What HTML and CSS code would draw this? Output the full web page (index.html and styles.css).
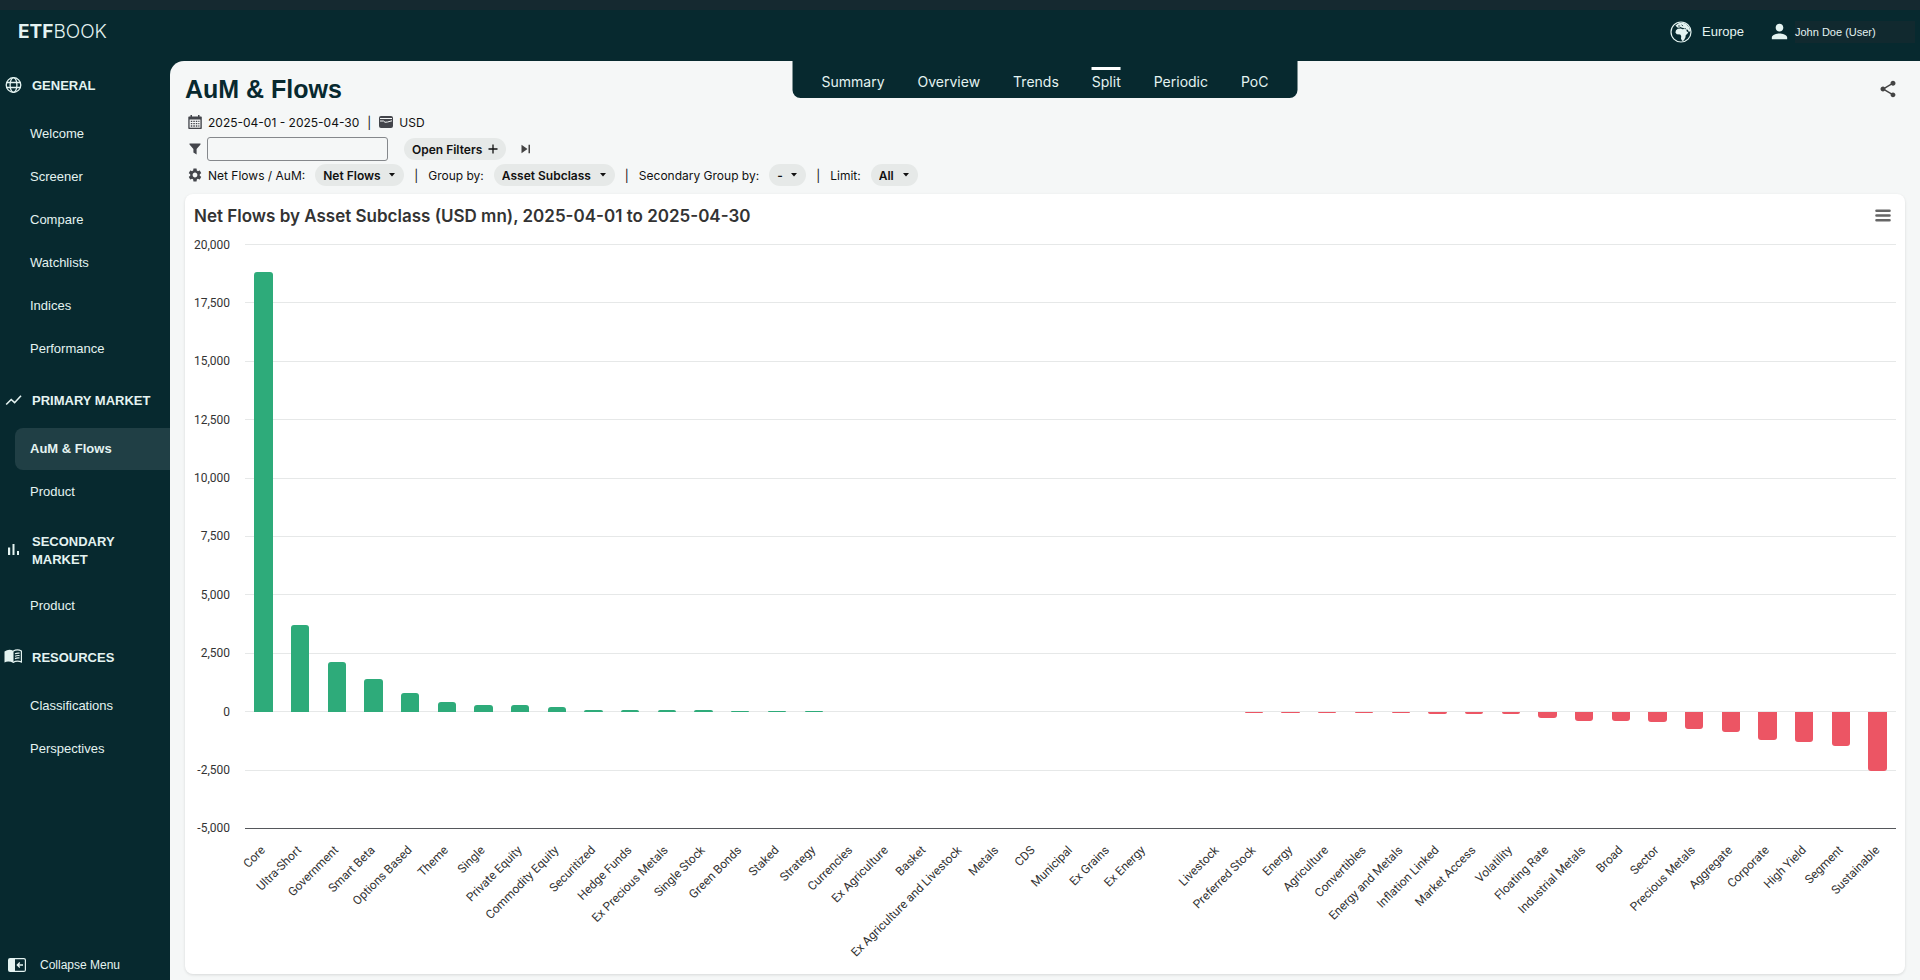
FILE: index.html
```html
<!DOCTYPE html>
<html lang="en">
<head>
  <meta charset="UTF-8">
  <meta name="viewport" content="width=device-width, initial-scale=1.0">
  <title>ETFBOOK - AuM &amp; Flows</title>
  <link rel="stylesheet" href="styles.css">
</head>
<body>
  <header class="topbar">
    <a class="logo" href="#"><b>ETF</b>BOOK</a>
    <div class="account">
      <button class="region" type="button">
        <svg width="22" height="22" viewBox="0 0 22 22">
          <circle cx="11" cy="11" r="10" fill="none" stroke="currentColor" stroke-width="1.2"/>
          <path fill="currentColor" d="M5.500 4.500 8.500 2.200 12 1.600l3.800 1.200 3.400 3.400 1 3.600-1.200 1.400-1.200-2.400-1.600-.4.600 2 1.400.8-1 1.800-1.400 1-.4 2.600-1.600 2.800-1.600.6-1.200-2.200.2-2.800-1-1.600-3.400-.2-1.400-1.800.6-2.200 1.800-1.400 3-.4 1.600.8 2-.2-.8-1-1.600-.2-1.400-.8-1.600.8-1.600-.2z"/>
          <path d="M8 5h2.200M11.500 3.800l1.600 1.200M14.400 7.600l1.600.2" stroke="#07292f" stroke-width=".8"/>
        </svg>
        Europe
      </button>
      <button class="user" type="button">
        <svg width="23" height="23" viewBox="0 0 24 24" fill="currentColor"><path d="M12 12c2.21 0 4-1.79 4-4s-1.79-4-4-4-4 1.79-4 4 1.79 4 4 4zm0 2c-2.67 0-8 1.34-8 4v2h16v-2c0-2.66-5.33-4-8-4z"/></svg>
        <span>John Doe (User)</span>
      </button>
    </div>
  </header>

  <div class="layout">
    <aside class="sidebar">
      <nav>
        <h2>
          <svg width="18" height="18" viewBox="0 0 18 18" fill="none" stroke="currentColor" stroke-width="1.3"><circle cx="9.500" cy="8" r="7.3"/><ellipse cx="9.500" cy="8" rx="3.4" ry="7.3"/><path d="M2.7 5.5h13.6M2.7 10.5h13.6"/></svg>
          GENERAL
        </h2>
        <ul>
          <li><a href="#">Welcome</a></li>
          <li><a href="#">Screener</a></li>
          <li><a href="#">Compare</a></li>
          <li><a href="#">Watchlists</a></li>
          <li><a href="#">Indices</a></li>
          <li><a href="#">Performance</a></li>
        </ul>
        <h2>
          <svg width="18" height="18" viewBox="0 0 18 18" fill="none" stroke="currentColor" stroke-width="1.6"><path d="M2.200 12.500l5-5 3.400 3.200L17 3.800"/></svg>
          PRIMARY MARKET
        </h2>
        <ul>
          <li><a class="active" href="#">AuM &amp; Flows</a></li>
          <li><a href="#">Product</a></li>
        </ul>
        <h2>
          <svg width="18" height="18" viewBox="0 0 18 18" fill="currentColor"><path d="M4 5.5h2.200V13H4zM8.500 2h2v11h-2zM13 9h2v4h-2z"/></svg>
          SECONDARY MARKET
        </h2>
        <ul>
          <li><a href="#">Product</a></li>
        </ul>
        <h2>
          <svg width="18" height="18" viewBox="0 0 18 18"><path fill="currentColor" d="M0.500 2.500Q5-.5 9.500 2v12Q4.500 11.500 0.500 13.500z"/><path fill="none" stroke="currentColor" stroke-width="1.2" d="M9 2.200q4.500-2.600 8.400-.2v11Q13 11 9 13.500M11 4.800q2.200-1 4.600-.6M11 7.200q2.200-1 4.600-.6M11 9.600q2.200-1 4.600-.6"/></svg>
          RESOURCES
        </h2>
        <ul>
          <li><a href="#">Classifications</a></li>
          <li><a href="#">Perspectives</a></li>
        </ul>
      </nav>
      <button class="collapse" type="button">
        <svg width="18" height="14" viewBox="0 0 18 14"><rect x=".6" y=".6" width="16.800" height="12.800" rx="1.500" fill="none" stroke="currentColor" stroke-width="1.200"/><path fill="currentColor" d="M1 1h6v12H1z"/><path d="M15 7H9.500M11.800 4.500 9.300 7l2.500 2.500" fill="none" stroke="currentColor" stroke-width="1.300"/></svg>
        Collapse Menu
      </button>
    </aside>

    <main class="content">
      <nav class="tabs">
        <a href="#">Summary</a>
        <a href="#">Overview</a>
        <a href="#">Trends</a>
        <a class="active" href="#">Split</a>
        <a href="#">Periodic</a>
        <a href="#">PoC</a>
      </nav>

      <div class="title-row">
        <h1>AuM &amp; Flows</h1>
        <button class="icon-btn" type="button" aria-label="Share">
          <svg width="20" height="20" viewBox="0 0 24 24" fill="currentColor"><path d="M18 16.080c-.76 0-1.440.3-1.960.77L8.910 12.700c.05-.23.09-.46.09-.7s-.04-.47-.09-.7l7.050-4.110c.54.5 1.250.81 2.040.81 1.660 0 3-1.340 3-3s-1.340-3-3-3-3 1.340-3 3c0 .24.04.47.09.7L8.040 9.810C7.500 9.310 6.790 9 6 9c-1.660 0-3 1.340-3 3s1.340 3 3 3c.79 0 1.500-.31 2.040-.81l7.120 4.160c-.05.21-.08.43-.08.65 0 1.610 1.310 2.920 2.920 2.920s2.920-1.310 2.920-2.920-1.310-2.920-2.920-2.920z"/></svg>
        </button>
      </div>

      <div class="meta">
        <svg width="14" height="14" viewBox="0 0 14 14"><path fill="currentColor" d="M2.500 0H4v1.500h6V0h1.500v1.500H13a.8.8 0 0 1 .8.800v11a.7.7 0 0 1-.7.700H1a.7.7 0 0 1-.7-.700v-11a.8.8 0 0 1 .7-.800h1.500z"/><path fill="#f5f7f7" d="M1.600 4.500h10.800v8.200H1.600z"/><path fill="none" stroke="currentColor" stroke-width="1.300" stroke-dasharray="1.500 1" d="M2.800 6.400h8.600M2.800 8.700h8.600M2.800 11h8.600"/></svg>
        <span>2025-04-01 - 2025-04-30</span>
        <span class="sep">|</span>
        <svg width="14" height="12" viewBox="0 0 14 12"><rect width="14" height="12" rx="2" fill="currentColor"/><path fill="none" stroke="#f5f7f7" d="M1 2.500h12M1 5h3.500q1 2 4 1L13 4.800"/></svg>
        <span>USD</span>
      </div>

      <div class="filters">
        <svg width="14" height="14" viewBox="0 0 14 14" fill="currentColor"><path d="M1.500 1.500h11v1L8.600 7v5.500L5.400 10.500V7L1.500 2.500z"/></svg>
        <input type="text" aria-label="Filter">
        <button class="pill" type="button">Open Filters
          <svg width="10" height="10" viewBox="0 0 10 10" stroke="currentColor" stroke-width="1.300"><path d="M5 .5v9M.5 5h9"/></svg>
        </button>
        <button class="icon-btn" type="button" aria-label="Next">
          <svg width="10" height="10" viewBox="0 0 10 10" fill="currentColor"><path d="M.5.800v8.400L6.500 5zM7.500.8H9v8.400H7.500z"/></svg>
        </button>
      </div>

      <div class="settings">
        <svg width="16" height="16" viewBox="0 0 24 24" fill="currentColor"><path d="M19.140 12.940c.04-.3.060-.61.060-.94 0-.32-.02-.64-.07-.94l2.030-1.580c.18-.14.230-.41.120-.61l-1.920-3.320c-.12-.22-.37-.29-.59-.22l-2.390.96c-.5-.38-1.030-.7-1.620-.94l-.36-2.540c-.04-.24-.24-.41-.48-.41h-3.840c-.24 0-.43.17-.47.41l-.36 2.540c-.59.24-1.130.57-1.620.94l-2.390-.96c-.22-.08-.47 0-.59.22L2.740 8.870c-.12.21-.08.47.12.61l2.030 1.580c-.05.3-.09.63-.09.94s.02.64.07.94l-2.030 1.580c-.18.14-.23.41-.12.61l1.920 3.320c.12.22.37.29.59.22l2.390-.96c.5.38 1.030.7 1.620.94l.36 2.540c.05.24.24.41.48.41h3.840c.24 0 .44-.17.47-.41l.36-2.540c.59-.24 1.130-.56 1.620-.94l2.390.96c.22.08.47 0 .59-.22l1.920-3.320c.12-.22.07-.47-.12-.61l-2.010-1.580zM12 15.600c-1.980 0-3.600-1.620-3.600-3.600s1.620-3.600 3.600-3.600 3.600 1.620 3.600 3.600-1.620 3.600-3.600 3.600z"/></svg>
        <label for="metric">Net Flows / AuM:</label>
        <div class="pill">
          <select id="metric"><option>Net Flows</option></select>
          <svg width="6" height="4" viewBox="0 0 6 4" fill="currentColor"><path d="M0 0h6L3 3.500z"/></svg>
        </div>
        <span class="sep">|</span>
        <label for="group">Group by:</label>
        <div class="pill">
          <select id="group"><option>Asset Subclass</option></select>
          <svg width="6" height="4" viewBox="0 0 6 4" fill="currentColor"><path d="M0 0h6L3 3.500z"/></svg>
        </div>
        <span class="sep">|</span>
        <label for="group2">Secondary Group by:</label>
        <div class="pill">
          <select id="group2"><option>-</option></select>
          <svg width="6" height="4" viewBox="0 0 6 4" fill="currentColor"><path d="M0 0h6L3 3.500z"/></svg>
        </div>
        <span class="sep">|</span>
        <label for="limit">Limit:</label>
        <div class="pill">
          <select id="limit"><option>All</option></select>
          <svg width="6" height="4" viewBox="0 0 6 4" fill="currentColor"><path d="M0 0h6L3 3.500z"/></svg>
        </div>
      </div>

      <section class="card">
        <div class="card-head">
          <h3>Net Flows by Asset Subclass (USD mn), 2025-04-01 to 2025-04-30</h3>
          <button class="icon-btn" type="button" aria-label="Chart menu">
            <svg width="16" height="13" viewBox="0 0 16 13" stroke="currentColor" stroke-width="2.600" stroke-linecap="round"><path d="M1.500 1.800h13M1.500 6.500h13M1.500 11.200h13"/></svg>
          </button>
        </div>
        <div class="chart">
          <div class="ticks" id="ticks"></div>
          <div class="bars" id="bars"></div>
        </div>
        <div class="labels" id="labels"></div>
      </section>
    </main>
  </div>

  <script>
    const max = 20000;
    const min = -5000;
    const step = 2500;

    const data = [
      ["Core", 18820], ["Ultra-Short", 3730], ["Government", 2150], ["Smart Beta", 1390],
      ["Options Based", 810], ["Theme", 410], ["Single", 290], ["Private Equity", 290],
      ["Commodity Equity", 210], ["Securitized", 90], ["Hedge Funds", 90],
      ["Ex Precious Metals", 90], ["Single Stock", 85], ["Green Bonds", 45], ["Staked", 45],
      ["Strategy", 45], ["Currencies", 0], ["Ex Agriculture", 0], ["Basket", 0],
      ["Ex Agriculture and Livestock", 0], ["Metals", 0], ["CDS", 0], ["Municipal", 0],
      ["Ex Grains", 0], ["Ex Energy", 0], ["", 0], ["Livestock", 0],
      ["Preferred Stock", -40], ["Energy", -40], ["Agriculture", -40], ["Convertibles", -40],
      ["Energy and Metals", -45], ["Inflation Linked", -65], ["Market Access", -105],
      ["Volatility", -105], ["Floating Rate", -270], ["Industrial Metals", -400],
      ["Broad", -400], ["Sector", -430], ["Precious Metals", -710], ["Aggregate", -840],
      ["Corporate", -1200], ["High Yield", -1280], ["Segment", -1440], ["Sustainable", -2530]
    ];

    let ticks = "";
    for (let v = max; v >= min; v -= step) {
      ticks += `<div class="tick"><span>${v.toLocaleString("en-US")}</span><i></i></div>`;
    }
    document.getElementById("ticks").innerHTML = ticks;

    let bars = "";
    let labels = "";
    data.forEach(([name, value]) => {
      const range = value < 0 ? -min : max;
      const height = Math.abs(value) / range * 100;
      bars += `<div class="slot"><div class="${value < 0 ? "neg" : "pos"}" style="height: ${height}%"></div></div>`;
      labels += `<div class="label"><span>${name}</span></div>`;
    });
    document.getElementById("bars").innerHTML = bars;
    document.getElementById("labels").innerHTML = labels;
  </script>
</body>
</html>
```

FILE: styles.css
```css
* {
  box-sizing: border-box;
}

body {
  margin: 0;
  min-height: 100vh;
  display: flex;
  flex-direction: column;
  background: #07292f;
  color: #111;
  font-family: "Liberation Sans", Arial, sans-serif;
  font-size: 13px;
}

h1, h2, h3, ul {
  margin: 0;
  padding: 0;
}

a {
  color: inherit;
  text-decoration: none;
}

button, select {
  border: none;
  padding: 0;
  background: none;
  color: inherit;
  font: inherit;
  cursor: pointer;
}

svg {
  flex: none;
}

/* top bar */
.topbar {
  height: 61px;
  padding: 0 5px 0 18px;
  border-top: 10px solid #152930;
  display: flex;
  justify-content: space-between;
  align-items: center;
  color: #e4f3f1;
}

.logo {
  font-family: Inter, sans-serif;
  font-size: 19px;
  font-weight: 300;
  margin-bottom: 8px;
}

.logo b {
  font-weight: 700;
}

.account {
  display: flex;
  gap: 24px;
  margin-bottom: 8px;
}

.region, .user {
  display: flex;
  align-items: center;
}

.region {
  gap: 10px;
}

.user {
  gap: 4px;
  font-size: 11px;
}

.user span {
  width: 120px;
  line-height: 22px;
  text-align: left;
  background: #11292f;
}

.layout {
  flex: 1;
  display: flex;
}

/* sidebar */
.sidebar {
  width: 170px;
  padding-top: 14px;
  display: flex;
  flex-direction: column;
  justify-content: space-between;
  color: #e4f3f1;
}

.sidebar h2 {
  display: flex;
  align-items: center;
  gap: 10px;
  min-height: 22px;
  margin: 20px 0 16px;
  padding-left: 4px;
  font-size: 13px;
  line-height: 18px;
}

.sidebar h2:first-child {
  margin-top: 0;
}

.sidebar ul {
  list-style: none;
  display: flex;
  flex-direction: column;
  gap: 1px;
}

.sidebar li a {
  display: block;
  margin-left: 15px;
  padding-left: 15px;
  line-height: 42px;
  border-radius: 8px 0 0 8px;
}

.sidebar li a.active {
  background: #203f45;
  font-weight: bold;
}

.collapse {
  display: flex;
  align-items: center;
  gap: 14px;
  padding: 0 8px 8px;
  font-size: 12px;
}

/* main */
.content {
  flex: 1;
  min-width: 0;
  position: relative;
  display: flex;
  flex-direction: column;
  padding: 12px 15px 6px;
  background: #f5f7f7;
  border-top-left-radius: 14px;
}

.tabs {
  position: absolute;
  top: 0;
  left: 50%;
  transform: translateX(-50%);
  display: flex;
  gap: 33px;
  height: 37px;
  padding: 6px 29px 0;
  background: #07292f;
  border-radius: 0 0 8px 8px;
  color: #e4f3f1;
  font-family: Inter, sans-serif;
  font-size: 14px;
  line-height: 24px;
}

.tabs a {
  height: 27px;
  border-top: 3px solid transparent;
}

.tabs a.active {
  border-top-color: #fff;
}

.title-row {
  display: flex;
  justify-content: space-between;
  align-items: center;
  height: 32px;
  padding-right: 7px;
}

h1 {
  font-size: 25px;
  color: #07292f;
}

.icon-btn {
  display: flex;
  color: #444;
}

.meta, .filters, .settings {
  display: flex;
  align-items: center;
  height: 26px;
  font-family: Inter, sans-serif;
  font-size: 12px;
}

.meta svg, .filters > svg, .settings > svg {
  color: #43454b;
}

.meta {
  gap: 6px;
  height: 31px;
  padding: 3px 0 0 3px;
}

.meta .sep {
  margin: 0 2px;
}

.filters {
  padding-left: 3px;
}

.filters input {
  width: 181px;
  height: 24px;
  margin: 0 16px 0 5px;
  border: 1px solid #85888c;
  border-radius: 3px;
  background: transparent;
  font: inherit;
}

.filters .pill {
  gap: 6px;
}

.filters .icon-btn {
  margin-left: 15px;
}

.settings {
  gap: 10px;
  padding-left: 2px;
}

.settings > svg {
  margin-right: -5px;
}

.pill {
  display: flex;
  align-items: center;
  gap: 8px;
  height: 22px;
  padding: 0 8px;
  border-radius: 11px;
  background: #e6e9e8;
  font-weight: 600;
}

.pill select {
  appearance: none;
}

.pill select + svg {
  margin-right: 1px;
}

/* chart card */
.card {
  flex: 1;
  display: flex;
  flex-direction: column;
  margin-top: 6px;
  padding: 9px 9px 0;
  background: #fff;
  border-radius: 8px;
  box-shadow: 0 1px 3px rgba(0, 0, 0, 0.12);
}

.card-head {
  display: flex;
  justify-content: space-between;
  align-items: center;
  height: 25px;
  padding-right: 5px;
  color: #333;
}

h3 {
  font-family: Inter, sans-serif;
  font-size: 17px;
  font-weight: 600;
}

.card-head .icon-btn {
  color: #666;
}

.chart {
  flex: 1;
  display: grid;
  margin-top: 16px;
  font-family: Roboto, sans-serif;
  font-size: 12px;
  color: #333;
}

.ticks, .bars {
  grid-area: 1 / 1;
}

.ticks {
  display: flex;
  flex-direction: column;
  justify-content: space-between;
}

.tick {
  display: flex;
  align-items: center;
  gap: 15px;
  height: 1px;
}

.tick span {
  width: 36px;
  text-align: right;
  white-space: nowrap;
}

.tick i {
  flex: 1;
  height: 1px;
  background: #e6e8e8;
}

.tick:last-child i {
  background: #55575b;
}

.bars, .labels {
  display: grid;
  grid-template-columns: repeat(45, 1fr);
  margin-left: 51px;
}

.slot {
  display: grid;
  grid-template-rows: 80% 20%;
}

.pos, .neg {
  width: 50%;
  justify-self: center;
}

.pos {
  grid-row: 1;
  align-self: end;
  background: #2eab7a;
  border-radius: 3px 3px 0 0;
}

.neg {
  grid-row: 2;
  background: #ec5564;
  border-radius: 0 0 3px 3px;
}

.labels {
  height: 145px;
  padding-top: 12px;
  font-family: Roboto, sans-serif;
  font-size: 12px;
  line-height: 14px;
  color: #333;
}

.label {
  min-width: 0;
  display: flex;
  justify-content: flex-end;
  align-items: flex-start;
  padding-right: 19px;
}

.label span {
  white-space: nowrap;
  transform: rotate(-45deg);
  transform-origin: right center;
}
```
